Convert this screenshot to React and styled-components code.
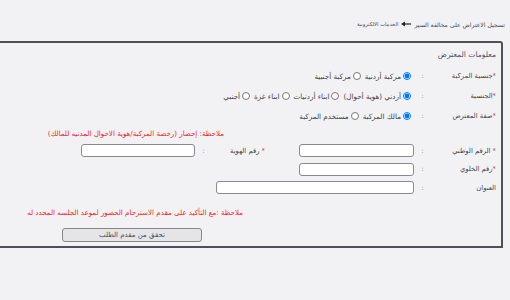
import React from 'react';
import styled, { createGlobalStyle } from 'styled-components';

const GlobalStyle = createGlobalStyle`
  html, body {
    margin: 0;
    padding: 0;
    background: #f2f2f4;
  }
  body {
    width: 510px;
    height: 300px;
    overflow: hidden;
    font-family: "DejaVu Sans", sans-serif;
  }
`;

const Page = styled.div`
  width: 510px;
  height: 300px;
  background: #f2f2f4;
`;

const Breadcrumb = styled.div`
  display: flex;
  justify-content: flex-end;
  align-items: center;
  gap: 3px;
  height: 14px;
  padding: 17px 5px 0 0;
  color: #444a58;

  .home {
    font-size: 5.2px;
  }

  .current {
    font-size: 6.1px;
  }
`;

const Panel = styled.div`
  direction: rtl;
  margin-top: 10px;
  width: 498px;
  height: 203px;
  border: 2px solid #4c505d;
  border-left: none;
  border-top-right-radius: 3px;
  padding-right: 3px;
  box-sizing: content-box;
`;

const PanelTitle = styled.div`
  height: 23px;
  display: flex;
  align-items: center;
  padding-right: 2px;
  font-size: 7.6px;
  color: #4a5060;
`;

const Row = styled.div`
  display: flex;
  align-items: center;
  height: ${(p) => p.h || 20}px;
`;

const Label = styled.div`
  width: ${(p) => p.w || 65}px;
  padding-right: 2px;
  font-size: 6.8px;
  color: #444;
  white-space: nowrap;

  b {
    color: #c0272d;
    font-weight: normal;
  }
`;

const Colon = styled.div`
  width: 17px;
  text-align: center;
  font-size: 6.5px;
  color: #666;
`;

const Options = styled.div`
  display: flex;
  align-items: center;
  padding-right: 3px;
`;

const Option = styled.label`
  display: flex;
  align-items: center;
  gap: 2px;
  margin-left: 4px;
  font-size: 7.2px;
  color: #444;
  white-space: nowrap;

  input {
    width: 8px;
    height: 8px;
    margin: 0;
  }
`;

const Field = styled.input`
  width: ${(p) => p.w}px;
  height: 13px;
  box-sizing: border-box;
  margin: 0;
  border: 1px solid #878a93;
  border-radius: 3px;
  background: #fff;
  outline: none;
`;

const Note = styled.div`
  display: flex;
  align-items: center;
  height: ${(p) => p.h}px;
  padding-right: ${(p) => p.offset}px;
  font-size: 7.1px;
  color: #f0262c;
  white-space: nowrap;
`;

const Spacer = styled.div`
  width: ${(p) => p.w}px;
`;

const ButtonRow = styled.div`
  display: flex;
  padding-right: 296px;
  padding-top: 1px;
`;

const Button = styled.button`
  width: 140px;
  height: 14px;
  padding: 0;
  border: 1px solid #85878d;
  border-radius: 3px;
  background: #e5e5e7;
  font-family: "DejaVu Sans", sans-serif;
  font-size: 7px;
  color: #4a4a55;
`;

const Arrow = () => (
  <svg width="10" height="6" viewBox="0 0 10 6">
    <path d="M0 3 L4 0.5 L4 5.5 Z" fill="#222" />
    <rect x="3.5" y="2.4" width="6.5" height="1.2" fill="#222" />
  </svg>
);

const Radio = ({ name, label, checked }) => (
  <Option>
    <input type="radio" name={name} defaultChecked={checked} />
    {label}
  </Option>
);

const App = () => {
  return (
    <Page>
      <GlobalStyle />
      <Breadcrumb>
        <span className="home">الخدمات الالكترونية</span>
        <Arrow />
        <span className="current">تسجيل الاعتراض على مخالفة السير</span>
      </Breadcrumb>
      <Panel>
        <PanelTitle>معلومات المعترض</PanelTitle>
        <Row h={20}>
          <Label>
            <b>*</b>جنسية المركبة
          </Label>
          <Colon>:</Colon>
          <Options>
            <Radio name="car" label="مركبة أردنية" checked />
            <Radio name="car" label="مركبة أجنبية" />
          </Options>
        </Row>
        <Row h={20}>
          <Label>
            <b>*</b>الجنسية
          </Label>
          <Colon>:</Colon>
          <Options>
            <Radio name="nat" label="أردني (هوية أحوال)" checked />
            <Radio name="nat" label="ابناء أردنيات" />
            <Radio name="nat" label="ابناء غزة" />
            <Radio name="nat" label="أجنبي" />
          </Options>
        </Row>
        <Row h={20}>
          <Label>
            <b>*</b>صفة المعترض
          </Label>
          <Colon>:</Colon>
          <Options>
            <Radio name="role" label="مالك المركبة" checked />
            <Radio name="role" label="مستخدم المركبة" />
          </Options>
        </Row>
        <Note h={15} offset={274}>
          ملاحظة: إحضار (رخصة المركبة/هوية الاحوال المدنيه للمالك)
        </Note>
        <Row h={19}>
          <Label>
            <b>* </b>الرقم الوطني
          </Label>
          <Colon>:</Colon>
          <Field w={115} />
          <Spacer w={32} />
          <Label w={53}>
            <b>* </b>رقم الهوية
          </Label>
          <Colon>:</Colon>
          <Field w={114} />
        </Row>
        <Row h={18}>
          <Label>
            <b>*</b>رقم الخلوي
          </Label>
          <Colon>:</Colon>
          <Field w={115} />
        </Row>
        <Row h={19}>
          <Label>العنوان</Label>
          <Colon>:</Colon>
          <Field w={198} />
        </Row>
        <Note h={30} offset={255}>
          ملاحظة :مع التأكيد على مقدم الاسترحام الحضور لموعد الجلسه المحدد له
        </Note>
        <ButtonRow>
          <Button type="button">تحقق من مقدم الطلب</Button>
        </ButtonRow>
      </Panel>
    </Page>
  );
};

export default App;
